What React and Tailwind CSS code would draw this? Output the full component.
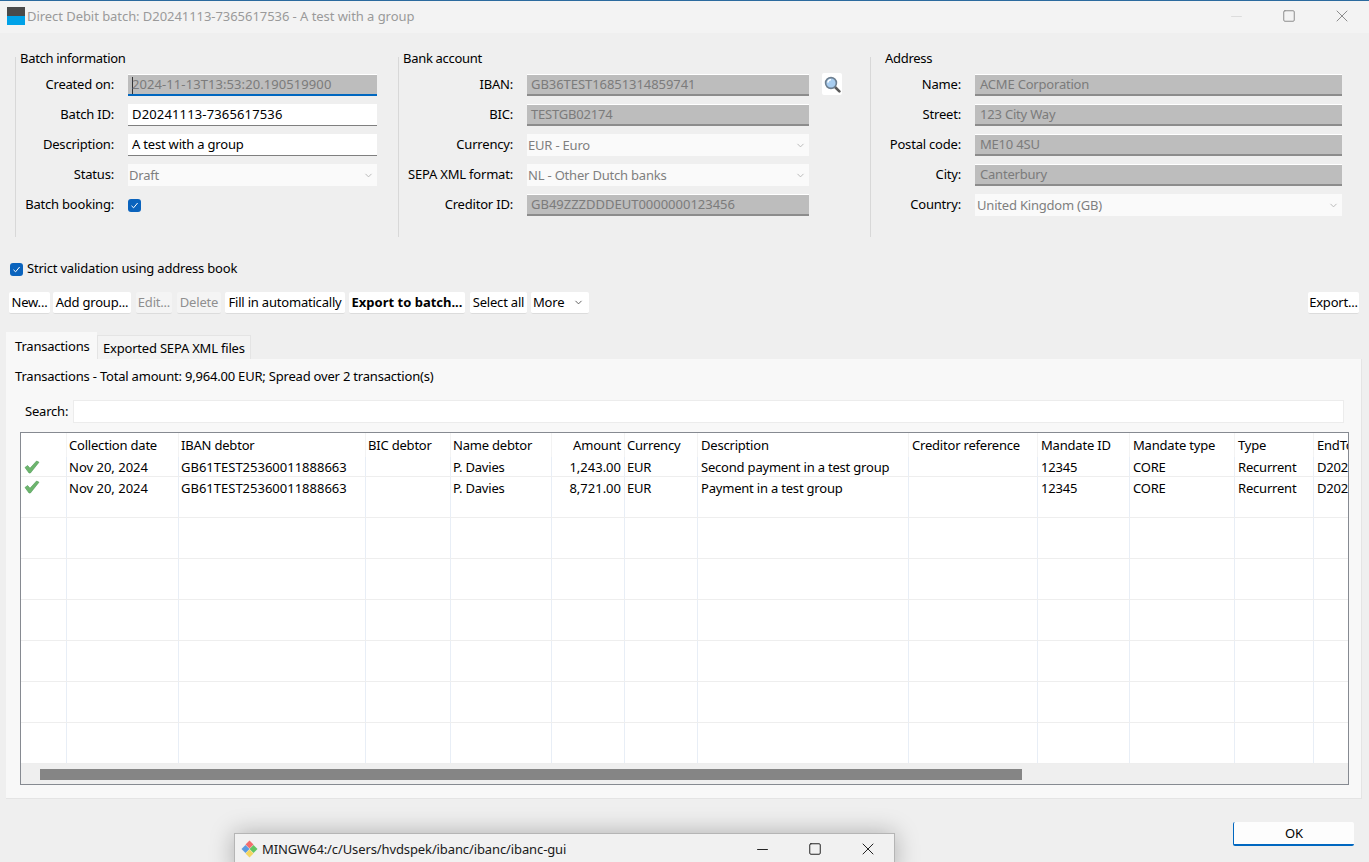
import { ChevronDown, Minus, Square, X } from "lucide-react";

const columns = [
  { label: "", width: "w-[46px]" },
  { label: "Collection date", width: "w-[112px]", pad: "pl-[2px]" },
  { label: "IBAN debtor", width: "w-[187px]", pad: "pl-[2px]" },
  { label: "BIC debtor", width: "w-[85px]", pad: "pl-[2px]" },
  { label: "Name debtor", width: "w-[101px]", pad: "pl-[2px]" },
  { label: "Amount", width: "w-[73px]", right: true },
  { label: "Currency", width: "w-[73px]", pad: "pl-[2px]" },
  { label: "Description", width: "w-[211px]" },
  { label: "Creditor reference", width: "w-[129px]" },
  { label: "Mandate ID", width: "w-[92px]" },
  { label: "Mandate type", width: "w-[105px]" },
  { label: "Type", width: "w-[79px]" },
  { label: "EndToEndId", width: "w-[120px]" },
];

const transactions = [
  ["", "Nov 20, 2024", "GB61TEST25360011888663", "", "P. Davies", "1,243.00", "EUR", "Second payment in a test group", "", "12345", "CORE", "Recurrent", "D20241113-1"],
  ["", "Nov 20, 2024", "GB61TEST25360011888663", "", "P. Davies", "8,721.00", "EUR", "Payment in a test group", "", "12345", "CORE", "Recurrent", "D20241113-2"],
];

const emptyRows = [1, 2, 3, 4, 5, 6];

function Label({ children, width }) {
  return <span className={`${width} shrink-0 text-right`}>{children}</span>;
}

function Field({ label, labelWidth, value, kind = "readonly", focused, spacing = "" }) {
  let box = "bg-[#bdbdbd] border-t border-b-2 border-t-white border-b-[#8c8c8c] text-[#7b7b7b] pl-1";
  if (kind === "edit") box = "bg-white border-b border-b-[#7f7f7f] text-black pl-1";
  if (kind === "select") box = "bg-[#fafafa] text-[#7f7f7f] pl-[1px] justify-between";
  if (focused) box = "bg-[#bdbdbd] border-t border-b-2 border-t-white border-b-[#0067c0] text-[#7b7b7b] pl-1";
  return (
    <div className="flex items-center h-[30px]">
      <Label width={labelWidth}>{label}:</Label>
      <div className={`ml-[14px] -mt-[1px] pt-[2px] flex-1 h-[22px] flex items-center ${box}`}>
        {focused && <span className="w-px h-[17px] bg-[#333] -mr-px" />}
        <span className={spacing}>{value}</span>
        {kind === "select" && <ChevronDown size={11} className="mr-[3px] text-[#b5b5b5]" />}
      </div>
    </div>
  );
}

function Group({ title, className, children }) {
  return (
    <div className={`border-l border-[#d8d8d8] h-[180px] pl-1 ${className}`}>
      <div className="h-[15px] -mt-[6px] leading-[15px] tracking-[-0.3px]">{title}</div>
      <div className="mt-[4px]">{children}</div>
    </div>
  );
}

function ToolButton({ children, className = "" }) {
  return (
    <button className={`h-[22px] bg-white border-b border-[#dcdcdc] rounded-[2px] flex items-center justify-center whitespace-nowrap ${className}`}>
      {children}
    </button>
  );
}

function CheckBox() {
  return (
    <span className="w-[13px] h-[13px] rounded-[3px] bg-[#0a63bd] flex items-center justify-center">
      <svg width="9" height="9" viewBox="0 0 9 9" fill="none" stroke="white" strokeWidth="1">
        <path d="M1.5 4.8 L3.6 6.8 L7.6 2" />
      </svg>
    </span>
  );
}

function GreenCheck() {
  return (
    <svg width="16" height="14" viewBox="0 0 16 14">
      <path d="M1 7.5 L3.6 5.5 L6 8.2 L12.6 1 L15 2.2 L6.4 13 L5 13 Z" fill="#6db56d" stroke="#4c9a55" strokeWidth="0.6" />
    </svg>
  );
}

function Magnifier() {
  return (
    <svg width="17" height="17" viewBox="0 0 17 17">
      <path d="M11 11 L15.4 15.4" stroke="#5a5a5a" strokeWidth="2.6" strokeLinecap="round" />
      <circle cx="7" cy="7" r="5.4" fill="#a8cdf0" stroke="#6d7f90" strokeWidth="1.6" />
      <path d="M3.8 6.6 A3.3 3.3 0 0 1 7 3.6" stroke="white" strokeWidth="1.2" fill="none" />
    </svg>
  );
}

function GitIcon() {
  return (
    <svg width="17" height="18" viewBox="0 0 17 18" className="shrink-0">
      <path d="M8.5 0.5 L12.5 4.5 L8.5 8.5 L4.5 4.5 Z" fill="#f26d6d" />
      <path d="M4.5 5 L8.5 9 L4.5 13 L0.5 9 Z" fill="#5b9be0" />
      <path d="M12.5 5 L16.5 9 L12.5 13 L8.5 9 Z" fill="#62c462" />
      <path d="M8.5 9.5 L12.5 13.5 L8.5 17.5 L4.5 13.5 Z" fill="#f2d662" />
    </svg>
  );
}

function Cell({ col, children, header, spacing = "", leading = "leading-[20px]" }) {
  return (
    <div
      className={`${col.width} shrink-0 h-full pr-[3px] ${col.pad || "pl-[3px]"} overflow-hidden whitespace-nowrap border-r ${
        header ? "border-[#f3f3f3] leading-[25px]" : `border-[#e8eef6] ${leading}`
      } ${col.right ? "text-right" : ""} ${spacing}`}
    >
      {children}
    </div>
  );
}

export default function App() {
  return (
    <div className="relative h-[862px] overflow-hidden bg-[#efefef] text-black font-['Noto_Sans',sans-serif] text-[13px] tracking-[-0.2px]">
      {/* title bar */}
      <header className="h-[33px] border-t-[1px] border-[#2b6a9e] bg-[#f3f3f3] flex items-center pl-[7px]">
        <div className="w-[18px] h-[18px] -mt-[2px] flex flex-col shrink-0">
          <div className="h-[9px] bg-[#4a4a4a]" />
          <div className="h-[9px] bg-[#00a2e8]" />
        </div>
        <span className="ml-[2px] text-[#9a9a9a] tracking-[-0.055px]">Direct Debit batch: D20241113-7365617536 - A test with a group</span>
        <div className="ml-auto -mt-[2px] flex items-center text-[#8c8c8c]">
          <Minus size={17} className="text-[#dcdcdc]" strokeWidth={1.4} />
          <Square size={14} className="ml-[37px]" strokeWidth={1.7} />
          <X size={20} className="ml-[36px] mr-[17px]" strokeWidth={1.2} />
        </div>
      </header>

      {/* batch, bank and address groups */}
      <section className="flex pl-[15px] pt-[24px] h-[205px]">
        <Group title="Batch information" className="w-[383px] pr-[21px]">
          <Field label="Created on" labelWidth="w-[94px]" value="2024-11-13T13:53:20.190519900" spacing="tracking-[0.08px]" focused />
          <Field label="Batch ID" labelWidth="w-[94px]" value="D20241113-7365617536" spacing="tracking-[0.15px]" kind="edit" />
          <Field label="Description" labelWidth="w-[94px]" value="A test with a group" kind="edit" />
          <Field label="Status" labelWidth="w-[94px]" value="Draft" kind="select" />
          <div className="flex items-center h-[30px]">
            <Label width="w-[94px]">Batch booking:</Label>
            <span className="ml-[14px]"><CheckBox /></span>
          </div>
        </Group>
        <Group title="Bank account" className="w-[472px] pr-[61px]">
          <div className="relative">
            <Field label="IBAN" labelWidth="w-[110px]" value="GB36TEST16851314859741" spacing="tracking-[-0.06px]" />
            <button className="absolute left-[419px] top-[3px] w-5 h-[22px] bg-white rounded-[2px] flex items-center justify-center">
              <Magnifier />
            </button>
          </div>
          <Field label="BIC" labelWidth="w-[110px]" value="TESTGB02174" />
          <Field label="Currency" labelWidth="w-[110px]" value="EUR - Euro" kind="select" />
          <Field label="SEPA XML format" labelWidth="w-[110px]" value="NL - Other Dutch banks" kind="select" />
          <Field label="Creditor ID" labelWidth="w-[110px]" value="GB49ZZZDDDEUT0000000123456" spacing="tracking-[-0.01px]" />
        </Group>
        <Group title="Address" className="w-[472px] pl-[14px] pr-0">
          <Field label="Name" labelWidth="w-[76px]" value="ACME Corporation" spacing="ml-[1px]" />
          <Field label="Street" labelWidth="w-[76px]" value="123 City Way" spacing="ml-[1px]" />
          <Field label="Postal code" labelWidth="w-[76px]" value="ME10 4SU" spacing="ml-[1px]" />
          <Field label="City" labelWidth="w-[76px]" value="Canterbury" spacing="ml-[1px]" />
          <Field label="Country" labelWidth="w-[76px]" value="United Kingdom (GB)" kind="select" spacing="ml-[1px]" />
        </Group>
      </section>

      <div className="flex items-center gap-1 pl-[10px] h-[20px] mt-[21px]">
        <CheckBox />
        <span>Strict validation using address book</span>
      </div>

      {/* toolbar */}
      <div className="flex pl-[9px] pr-[10px] mt-[13px]">
        <ToolButton className="w-[41px] mr-[3px]">New...</ToolButton>
        <ToolButton className="w-[78px] mr-[5px]">Add group...</ToolButton>
        <ToolButton className="w-[36px] mr-[5px] !bg-[#f4f4f4] text-[#8f8f8f]">Edit...</ToolButton>
        <ToolButton className="w-[44px] mr-[4px] !bg-[#f4f4f4] text-[#8f8f8f]">Delete</ToolButton>
        <ToolButton className="w-[120px] mr-[4px]">Fill in automatically</ToolButton>
        <ToolButton className="w-[116px] mr-[5px] font-bold tracking-normal">Export to batch...</ToolButton>
        <ToolButton className="w-[57px] mr-[4px]">Select all</ToolButton>
        <ToolButton className="w-[58px] !justify-between pl-[2px] pr-[5px]">
          More
          <ChevronDown size={11} className="text-[#555]" />
        </ToolButton>
        <ToolButton className="w-[51px] ml-auto">Export...</ToolButton>
      </div>

      {/* tabs */}
      <div className="flex items-end pl-[6px] mt-[18px] h-[27px]">
        <div className="w-[91px] h-[27px] bg-[#f8f8f8] pl-[9px] leading-[28px]">Transactions</div>
        <div className="w-[154px] h-[24px] bg-[#f3f3f3] border border-b-0 border-[#e4e4e4] pl-[5px] leading-[25px]">Exported SEPA XML files</div>
      </div>

      <main className="ml-[6px] mr-[7px] h-[440px] bg-[#f8f8f8] border-b border-r border-[#e4e4e4] pl-[9px] pr-[12px]">
        <div className="h-[36px] leading-[34px]">Transactions - Total amount: 9,964.00 EUR; Spread over 2 transaction(s)</div>
        <div className="flex items-center h-[23px] mt-[5px] pl-[10px]">
          <span className="w-[48px] shrink-0">Search:</span>
          <div className="flex-1 h-full bg-white border border-[#ececec] mr-[5px]" />
        </div>

        <div className="mt-[9px] ml-[5px] h-[353px] border border-[#868a91] bg-[#efefef] overflow-hidden flex flex-col">
          <div className="flex h-[24px] bg-white shrink-0">
            {columns.map((c) => (
              <Cell key={c.label} col={c} header>{c.label}</Cell>
            ))}
          </div>
          <div className="bg-white shrink-0">
            {transactions.map((row, i) => (
              <div key={i} className={`flex border-b border-[#eeeeee] ${i === 0 ? "h-[20px]" : "h-[41px]"}`}>
                {row.map((v, j) => (
                  <Cell
                    key={j}
                    col={columns[j]}
                    spacing={j === 1 || j === 2 || j === 5 ? "tracking-normal" : ""}
                    leading={i === 0 ? "leading-[20px]" : "leading-[22px]"}
                  >
                    {j === 0 ? <div className="h-[20px] flex items-center"><GreenCheck /></div> : v}
                  </Cell>
                ))}
              </div>
            ))}
            {emptyRows.map((r) => (
              <div key={r} className="flex h-[41px] border-b border-[#eeeeee]">
                {columns.map((c) => (
                  <Cell key={c.label} col={c} />
                ))}
              </div>
            ))}
          </div>
          <div className="pl-[19px] pt-[5px]">
            <div className="h-[11px] w-[982px] bg-[#858585]" />
          </div>
        </div>
      </main>

      <footer className="flex justify-end pr-[15px] mt-[23px]">
        <button className="w-[121px] h-[24px] pt-[2px] bg-[#fdfdfd] border-l border-b-2 border-[#0067c0] rounded-[2px]">OK</button>
      </footer>

      {/* terminal window lying over the dialog */}
      <div className="absolute left-[234px] top-[833px] w-[661px] h-[40px] bg-[#f1f1f1] border border-[#b5b5b5] shadow-[0_0_24px_rgba(0,0,0,0.28)] flex items-start pl-[6px] pt-[6px]">
        <GitIcon />
        <span className="ml-[4px] leading-[18px] text-[#1a1a1a] tracking-[-0.11px]">MINGW64:/c/Users/hvdspek/ibanc/ibanc/ibanc-gui</span>
        <div className="ml-auto flex items-center h-[18px] text-[#222]">
          <Minus size={17} strokeWidth={1.4} />
          <Square size={14} className="ml-[37px]" strokeWidth={1.7} />
          <X size={20} className="ml-[36px] mr-[16px]" strokeWidth={1.2} />
        </div>
      </div>
    </div>
  );
}
